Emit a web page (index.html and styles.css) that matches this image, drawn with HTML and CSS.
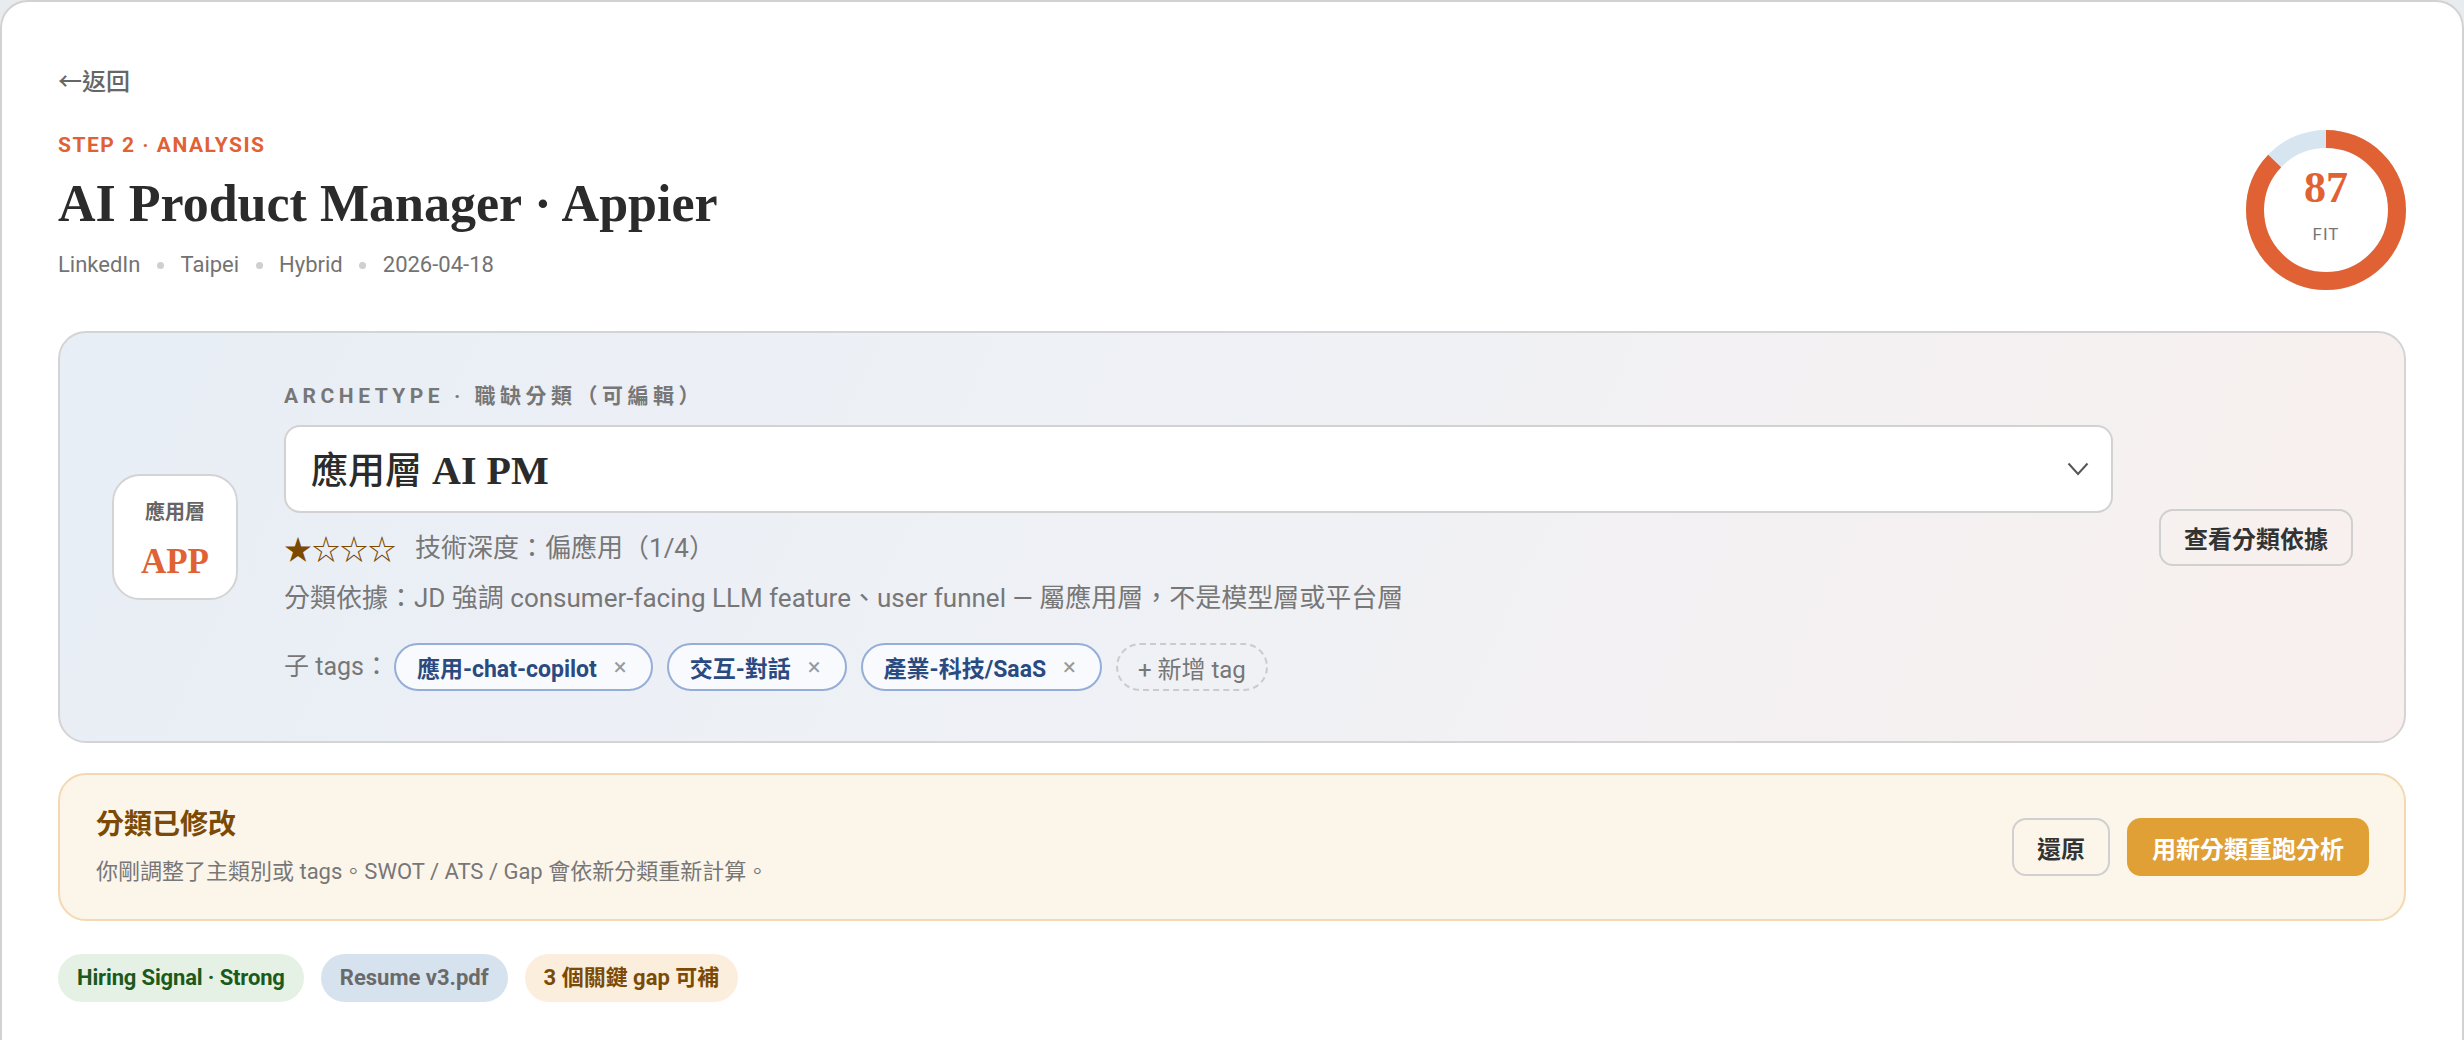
FILE: index.html
```html
<!DOCTYPE html>
<html lang="zh-Hant">
<head>
<meta charset="utf-8">
<title>Analysis</title>
<link rel="stylesheet" href="styles.css">
</head>
<body>
<div class="frame">
  <a class="back">←返回</a>
  <header class="head">
    <div class="head-text">
      <div class="step">STEP 2 · ANALYSIS</div>
      <h1 class="title">AI Product Manager · Appier</h1>
      <div class="meta"><span>LinkedIn</span><i class="sep"></i><span>Taipei</span><i class="sep"></i><span>Hybrid</span><i class="sep"></i><span>2026-04-18</span></div>
    </div>
    <div class="ring">
      <svg width="160" height="160" viewBox="0 0 160 160">
        <circle cx="80" cy="80" r="71" fill="none" stroke="#d7e5f0" stroke-width="18"/>
        <circle cx="80" cy="80" r="71" fill="none" stroke="#e06234" stroke-width="18" stroke-dasharray="388.1 446.1" transform="rotate(-90 80 80)"/>
      </svg>
      <div class="ring-label"><div class="score">87</div><div class="fit">FIT</div></div>
    </div>
  </header>

  <section class="arch">
    <div class="badge"><div class="badge-cn">應用層</div><div class="badge-en">APP</div></div>
    <div class="arch-main">
      <div class="arch-label">ARCHETYPE · 職缺分類（可編輯）</div>
      <div class="select">
        <span class="select-val"><span class="cjk">應用層</span> AI PM</span>
        <svg class="chev" width="22" height="14" viewBox="0 0 22 14"><polyline points="1.5,1.5 11,12 20.5,1.5" fill="none" stroke="#555" stroke-width="2"/></svg>
      </div>
      <div class="depth"><span class="stars">★☆☆☆</span><span>技術深度：偏應用（1/4）</span></div>
      <div class="reason">分類依據：JD 強調 consumer-facing LLM feature、user funnel — 屬應用層，不是模型層或平台層</div>
      <div class="tags">
        <span class="tags-label">子 tags：</span>
        <span class="tag">應用-chat-copilot<span class="x">×</span></span>
        <span class="tag">交互-對話<span class="x">×</span></span>
        <span class="tag">產業-科技/SaaS<span class="x">×</span></span>
        <span class="tag-add">+ 新增 tag</span>
      </div>
    </div>
    <button class="btn btn-outline">查看分類依據</button>
  </section>

  <section class="notice">
    <div class="notice-text">
      <div class="notice-title">分類已修改</div>
      <div class="notice-sub">你剛調整了主類別或 tags。SWOT / ATS / Gap 會依新分類重新計算。</div>
    </div>
    <div class="notice-actions">
      <button class="btn btn-outline">還原</button>
      <button class="btn btn-primary">用新分類重跑分析</button>
    </div>
  </section>

  <div class="chips">
    <span class="chip chip-green">Hiring Signal · Strong</span>
    <span class="chip chip-blue">Resume v3.pdf</span>
    <span class="chip chip-amber">3 個關鍵 gap 可補</span>
  </div>
</div>
</body>
</html>
```

FILE: styles.css
```css
* { box-sizing: border-box; }
html, body { margin: 0; padding: 0; }
body {
  background: #e9ecef;
  font-family: Roboto, "Noto Sans CJK TC", sans-serif;
  color: #333;
  width: 2464px;
  height: 1040px;
  overflow: hidden;
}
.frame {
  background: #fff;
  border: 2px solid #d2d2d2;
  border-radius: 28px;
  height: 1100px;
  padding: 64px 56px 0;
}
.back {
  display: block;
  font-size: 24px;
  line-height: 32px;
  font-weight: 500;
  color: #666;
  margin-bottom: 34px;
}
.head {
  display: flex;
  justify-content: space-between;
  align-items: flex-start;
}
.step {
  font-size: 21px;
  line-height: 26px;
  font-weight: 700;
  letter-spacing: 1.5px;
  color: #e06234;
}
.title {
  margin: 14px 0 0;
  font-family: "Liberation Serif", "Noto Sans CJK TC", serif;
  font-size: 52px;
  line-height: 64px;
  font-weight: 700;
  color: #2b2b2b;
}
.meta {
  margin-top: 14px;
  font-size: 22px;
  line-height: 30px;
  color: #737373;
  display: flex;
  align-items: center;
}
.sep {
  width: 7px;
  height: 7px;
  border-radius: 50%;
  background: #cfcfcf;
  margin: 0 16.5px;
}
.ring {
  position: relative;
  width: 160px;
  height: 160px;
  margin-top: -2px;
}
.ring svg { display: block; }
.ring-label {
  position: absolute;
  inset: 0;
  display: flex;
  flex-direction: column;
  align-items: center;
  justify-content: center;
  padding-bottom: 11px;
}
.score {
  font-family: "Liberation Serif", serif;
  font-weight: 700;
  font-size: 44px;
  line-height: 44px;
  color: #e06234;
}
.fit {
  margin-top: 14px;
  font-size: 17px;
  line-height: 20px;
  letter-spacing: 1px;
  color: #777;
}

/* archetype card */
.arch {
  margin-top: 41px;
  display: flex;
  align-items: center;
  gap: 46px;
  padding: 50px 51px 50px 52px;
  border: 2px solid #d4d4d4;
  border-radius: 28px;
  background: linear-gradient(115deg, #e8eef6 0%, #eff1f5 50%, #f9f0ee 100%);
}
.badge {
  flex: none;
  width: 126px;
  height: 126px;
  border: 2px solid #d4d4d4;
  border-radius: 28px;
  background: #fff;
  display: flex;
  flex-direction: column;
  align-items: center;
  justify-content: center;
  padding-top: 4px;
}
.badge-cn {
  font-size: 20px;
  line-height: 24px;
  font-weight: 700;
  color: #666;
}
.badge-en {
  margin-top: 22px;
  font-family: "Liberation Serif", serif;
  font-size: 35px;
  line-height: 32px;
  font-weight: 700;
  color: #e06234;
}
.arch-main {
  flex: 1;
  min-width: 0;
}
.arch-label {
  font-size: 21px;
  line-height: 26px;
  font-weight: 700;
  letter-spacing: 4.5px;
  color: #777;
}
.select {
  margin-top: 16px;
  height: 88px;
  border: 2px solid #d2d2d2;
  border-radius: 16px;
  background: #fff;
  display: flex;
  align-items: center;
  justify-content: space-between;
  padding: 0 22px 0 25px;
}
.select-val {
  font-family: "Liberation Serif", "Noto Sans CJK TC", serif;
  font-size: 40px;
  line-height: 44px;
  font-weight: 700;
  color: #2b2b2b;
}
.select-val .cjk {
  font-family: "Noto Sans CJK TC", sans-serif;
  font-size: 37px;
  font-weight: 500;
}
.chev { display: block; }
.depth {
  margin-top: 17px;
  display: flex;
  align-items: center;
  font-size: 26px;
  line-height: 36px;
  color: #777;
}
.stars {
  font-family: "Noto Sans CJK TC", sans-serif;
  font-size: 28px;
  color: #7b4a00;
  margin-right: 19px;
}
.reason {
  margin-top: 14px;
  font-size: 26px;
  line-height: 36px;
  color: #777;
}
.tags {
  margin-top: 27px;
  display: flex;
  align-items: center;
  gap: 14px;
}
.tags-label {
  font-size: 25px;
  line-height: 36px;
  color: #777;
  margin-right: -9px;
}
.tag {
  display: inline-flex;
  align-items: center;
  height: 48px;
  padding: 0 24px 0 21px;
  border: 2px solid #95aed8;
  border-radius: 24px;
  background: #f8fafd;
  font-size: 23px;
  font-weight: 700;
  color: #2b4a80;
}
.tag .x {
  margin-left: 17px;
  font-size: 24px;
  font-weight: 400;
  color: #9a9a9a;
}
.tag-add {
  display: inline-flex;
  align-items: center;
  height: 48px;
  padding: 0 20px;
  border: 2px dashed #cbcbcb;
  border-radius: 24px;
  font-size: 24px;
  color: #777;
}

/* buttons */
.btn {
  flex: none;
  font-family: Roboto, "Noto Sans CJK TC", sans-serif;
  font-size: 24px;
  font-weight: 700;
  border-radius: 14px;
  padding: 0 23px;
  cursor: pointer;
}
.arch .btn { height: 57px; }
.btn-outline {
  border: 2px solid #d0d0d0;
  background: transparent;
  color: #333;
}
.btn-primary {
  border: 2px solid #e0a036;
  background: #e0a036;
  color: #fff;
}

/* notice */
.notice {
  margin-top: 30px;
  display: flex;
  align-items: center;
  justify-content: space-between;
  padding: 32px 35px 32px 36px;
  border: 2px solid #f3d9b2;
  border-radius: 28px;
  background: #fcf5ea;
}
.notice-title {
  font-size: 28px;
  line-height: 36px;
  font-weight: 700;
  color: #7a4a06;
}
.notice-sub {
  margin-top: 14px;
  font-size: 22px;
  line-height: 30px;
  color: #777;
}
.notice-actions {
  display: flex;
  gap: 17px;
}
.notice .btn { height: 58px; }

/* chips */
.chips {
  margin-top: 33px;
  display: flex;
  gap: 17px;
}
.chip {
  height: 48px;
  line-height: 48px;
  padding: 0 19px;
  border-radius: 24px;
  font-size: 22px;
  font-weight: 700;
}
.chip-green { background: #e5f1e4; color: #1c5a1c; letter-spacing: -0.15px; }
.chip-blue { background: #d6e3ef; color: #6a6a6a; }
.chip-amber { background: #fbeedd; color: #7a4a06; }
```
